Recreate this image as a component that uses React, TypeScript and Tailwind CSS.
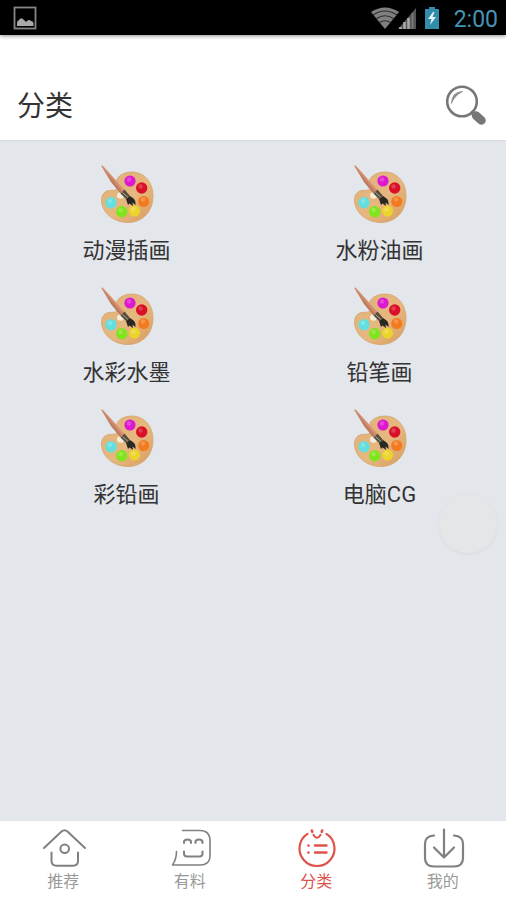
import type { ReactNode } from "react";

const categories = ["动漫插画", "水粉油画", "水彩水墨", "铅笔画", "彩铅画", "电脑CG"];

function PaletteIcon() {
  return (
    <svg viewBox="0 0 60 60" className="size-[60px]" aria-hidden="true">
      <defs>
        <linearGradient id="wood" x1="0" y1="0" x2="1" y2="1">
          <stop offset="0" stopColor="#dfb078" />
          <stop offset="0.55" stopColor="#e6b880" />
          <stop offset="1" stopColor="#d89b5c" />
        </linearGradient>
        <linearGradient id="handle" x1="0" y1="1" x2="1" y2="0">
          <stop offset="0.4" stopColor="#b06c4c" />
          <stop offset="0.6" stopColor="#eba88a" />
        </linearGradient>
      </defs>
      <path
        d="M35 8C47 8 56 18 56 32C56 48 45 58.500 31 58.500C16 58.500 4.500 48 4.500 36C4.500 30 8 27 12 26.500C16 26 19 27 20.500 24C22 20 18 17 21 13.500C24 10 29 8 35 8Z"
        fill="url(#wood)"
        stroke="#d5a36c"
        strokeWidth="0.8"
      />
      <ellipse cx="23.500" cy="31.500" rx="3.500" ry="3.200" fill="#f4eddb" />
      <circle cx="33" cy="17" r="5.600" fill="#dc18d0" />
      <circle cx="44.700" cy="24" r="5.700" fill="#da1029" />
      <circle cx="46.700" cy="37.500" r="5.500" fill="#f47a20" />
      <circle cx="37.500" cy="47" r="5.500" fill="#ecd52b" />
      <circle cx="24.700" cy="47.700" r="5.700" fill="#80e51c" />
      <circle cx="14" cy="38.700" r="5.700" fill="#63dfe0" />
      <g fill="#fff" opacity="0.2">
        <circle cx="32" cy="15.500" r="2.200" />
        <circle cx="43.500" cy="22.500" r="2.200" />
        <circle cx="46" cy="35.500" r="2.200" />
        <circle cx="36.500" cy="45.500" r="2.200" />
        <circle cx="23.500" cy="46" r="2.200" />
        <circle cx="13" cy="37" r="2.200" />
      </g>
      <path d="M4.300 2C4.500 1 6 1.500 7 3L27.500 25.500L23.500 29.500L14 18Z" fill="url(#handle)" />
      <path d="M27.500 25.500L33 32L29 35L23.500 29.500Z" fill="#554d40" />
      <path d="M25.500 28.500L31 33.500" stroke="#b5a990" strokeWidth="1" />
      <path d="M33 32C36 34 39 35 38.500 41L35.500 38.500L36 42L32.500 39.500L31 41L29 35Z" fill="#292823" />
    </svg>
  );
}

function NavIcon({ children }: { children: ReactNode }) {
  return (
    <svg
      viewBox="0 0 46 40"
      className="h-10 w-[46px]"
      fill="none"
      stroke="currentColor"
      strokeWidth="2"
      strokeLinecap="round"
      strokeLinejoin="round"
      aria-hidden="true"
    >
      {children}
    </svg>
  );
}

const tabs = [
  {
    label: "推荐",
    icon: (
      <NavIcon>
        <path d="M4 20L21.500 3.500Q24.500 1 27.500 3.500L45 20M11.500 24.500V33Q11.500 37.700 16.500 37.700H33Q38 37.700 38 33V24.500" />
        <circle cx="24.700" cy="20.700" r="4.300" />
      </NavIcon>
    ),
  },
  {
    label: "有料",
    icon: (
      <NavIcon>
        <path
          d="M15.500 2.500H33Q43 2.500 43 13V28Q43 37 33 37H5.500Q9.500 31 9.500 23.500"
          strokeWidth="1.600"
        />
        <path d="M17 15V14Q17 11.500 20.500 11.500T24 14V15M28.500 15V14Q28.500 11.500 32 11.500T35.500 14V15M17 23.500V25.500Q17 28.500 20 28.500H32.500Q35.500 28.500 35.500 25.500V23.500" />
      </NavIcon>
    ),
  },
  {
    label: "分类",
    icon: (
      <NavIcon>
        <path d="M14.500 5.800A17.500 17.500 0 1 0 33.500 5.800" strokeWidth="2.200" />
        <path d="M20.500 7Q24 12.500 27.500 7" strokeWidth="2.200" />
        <path d="M18.800 2.500L19.300 3.800M29.200 2.500L28.700 3.800M15.500 17.500V17.600M15.500 24.500V24.600" strokeWidth="2.600" />
        <path d="M22 17.500H33.500M22 24.500H33.500" strokeWidth="2.400" />
      </NavIcon>
    ),
  },
  {
    label: "我的",
    icon: (
      <NavIcon>
        <path
          d="M14 7.500Q5 8 5 16V30Q5 38.500 14 38.500H34Q43 38.500 43 30V16Q43 8 34 7.500M24 1.500V29.500M14 19.500L24 29.500L34 19.500"
          strokeWidth="2.200"
        />
      </NavIcon>
    ),
  },
];

function StatusBar() {
  return (
    <div className="relative z-10 flex h-[35px] items-center justify-between bg-black pr-2 pl-[13px] shadow-[0_1px_4px_rgba(0,0,0,0.45)]">
      <svg viewBox="0 0 24 24" className="size-6" aria-hidden="true">
        <rect x="1.500" y="1.500" width="21" height="21" fill="none" stroke="#858585" strokeWidth="1.800" />
        <path d="M4 20V17Q4 15 6 14Q8 10.500 11 14L13 16Q16 12.500 18 15Q20 15 20.500 17V20Z" fill="#aaa" />
      </svg>
      <div className="flex items-center gap-3">
        <svg viewBox="0 0 72 26" className="h-[26px] w-[72px]" aria-hidden="true">
          <path d="M1 7Q15 -2 29 7L15 24Z" fill="#808080" />
          <path d="M3 10Q15 2 27 10M6 14Q15 7.500 24 14M9 18Q15 13.500 21 18" fill="none" stroke="#303030" strokeWidth="1.200" />
          <path d="M28 24L46 3V24Z" fill="#555" />
          <path d="M30.500 24V22M34.500 24V17M38.500 24V13" stroke="#aaa" strokeWidth="2.500" />
          <path d="M42.500 24V8" stroke="#777" strokeWidth="2" />
          <path d="M55 4H59V2H65V4H69V24H55Z" fill="#318daa" />
          <path d="M63 7L58 14H61.500L60 20L66 12H62.500L64.500 7Z" fill="#e5f5f6" />
        </svg>
        <time className="pt-1 font-[Roboto,sans-serif] text-[23px] leading-8 text-[#4594b4]">2:00</time>
      </div>
    </div>
  );
}

export default function App() {
  return (
    <div className="relative flex min-h-screen flex-col bg-[#e3e7ec] font-[Roboto,'Noto_Sans_CJK_SC',sans-serif] text-[#333]">
      <StatusBar />
      <header className="flex items-start justify-between border-b border-[#d9d9d9] bg-white pt-[46px] pr-5 pb-[7px] pl-[17px]">
        <h1 className="text-[28px] leading-[52px]">分类</h1>
        <button type="button" aria-label="搜索">
          <svg viewBox="0 0 44 44" className="size-11" fill="none" stroke="#777" strokeLinecap="round" aria-hidden="true">
            <circle cx="20" cy="20.500" r="14.800" strokeWidth="2.600" />
            <path d="M9.500 22Q10 11 20.500 10.500Q13 14 9.500 22Z" fill="#888" stroke="#888" strokeWidth="0.8" />
            <path d="M30.500 31.500L34 35" strokeWidth="4" />
            <path d="M34 34.500L39.500 39.500" strokeWidth="8.500" />
          </svg>
        </button>
      </header>

      <main className="grow pt-[23px]">
        <ul className="grid grid-cols-2">
          {categories.map((name) => (
            <li key={name} className="pb-5">
              <button type="button" className="flex w-full flex-col items-center gap-3">
                <PaletteIcon />
                <span className="text-[22px] leading-[30px]">{name}</span>
              </button>
            </li>
          ))}
        </ul>
      </main>

      <button
        type="button"
        aria-label="悬浮按钮"
        className="absolute right-[9px] bottom-[347px] size-[58px] rounded-full bg-[#e3e7e8] shadow-[0_1px_4px_rgba(0,0,0,0.05)]"
      />

      <nav className="grid grid-cols-4 bg-white pt-[7px] pb-1">
        {tabs.map(({ label, icon }) => (
          <a
            key={label}
            href="#"
            aria-current={label === "分类" ? "page" : undefined}
            className="group flex flex-col items-center text-[#808080] aria-[current=page]:text-[#de524c]"
          >
            {icon}
            <span className="text-base leading-7 text-[#999] group-aria-[current=page]:text-[#de524c]">{label}</span>
          </a>
        ))}
      </nav>
    </div>
  );
}
